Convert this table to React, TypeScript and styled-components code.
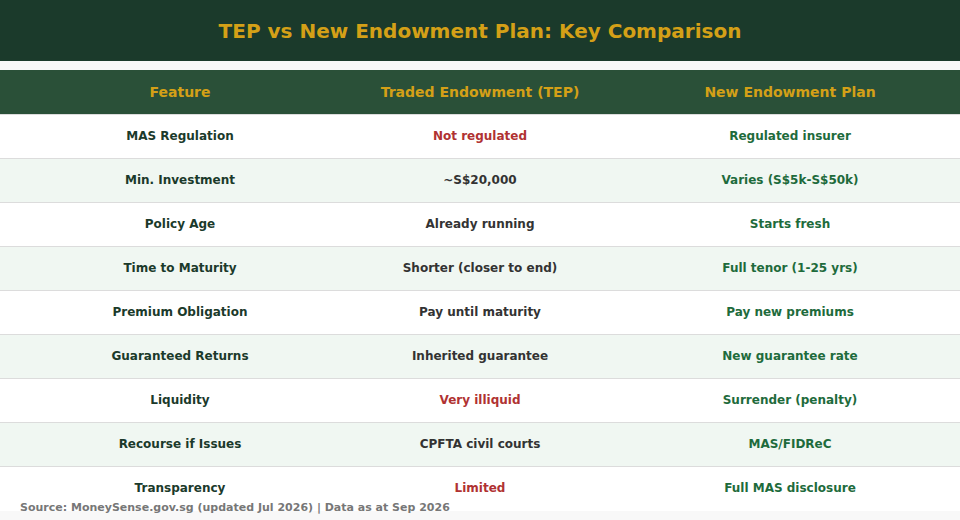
import React from "react";
import styled, { createGlobalStyle } from "styled-components";

const Global = createGlobalStyle`
  html, body { margin: 0; padding: 0; }
  body {
    background: #f8f8f8;
    font-family: "DejaVu Sans", "Liberation Sans", sans-serif;
    font-weight: bold;
  }
`;

const Page = styled.div`
  position: relative;
  width: 960px;
  height: 520px;
  overflow: hidden;
  display: flex;
  flex-direction: column;
`;

const TitleBar = styled.div`
  height: 61px;
  background: #1b3a2b;
  color: #d4a017;
  display: flex;
  align-items: center;
  justify-content: center;
  font-size: 20px;
  font-weight: bold;
  margin-bottom: 9px;
  flex-shrink: 0;
`;

const Row = styled.div<{ $bg: string; $height: number; $noBorder?: boolean }>`
  display: grid;
  grid-template-columns: 360px 240px 360px;
  height: ${(p) => p.$height}px;
  box-sizing: border-box;
  background: ${(p) => p.$bg};
  border-bottom: ${(p) => (p.$noBorder ? "none" : "1px solid #dcdcdc")};
  flex-shrink: 0;
`;

const Cell = styled.div<{ $color: string; $size: number; $last?: boolean; $lift?: number }>`
  display: flex;
  align-items: center;
  justify-content: center;
  color: ${(p) => p.$color};
  font-size: ${(p) => p.$size}px;
  font-weight: bold;
  padding-left: ${(p) => (p.$last ? "20px" : "0")};
  padding-bottom: ${(p) => p.$lift ?? 0}px;
`;

const Footer = styled.div`
  position: absolute;
  left: 20px;
  bottom: 6px;
  font-size: 11px;
  color: #777;
  font-weight: bold;
`;

const GOLD = "#d4a017";
const DARK = "#1b3a2b";
const GRAY = "#333333";
const RED = "#b03232";
const GREEN = "#1e6b3c";

type R = { f: string; t: string; tRed?: boolean; n: string };

const rows: R[] = [
  { f: "MAS Regulation", t: "Not regulated", tRed: true, n: "Regulated insurer" },
  { f: "Min. Investment", t: "~S$20,000", n: "Varies (S$5k-S$50k)" },
  { f: "Policy Age", t: "Already running", n: "Starts fresh" },
  { f: "Time to Maturity", t: "Shorter (closer to end)", n: "Full tenor (1-25 yrs)" },
  { f: "Premium Obligation", t: "Pay until maturity", n: "Pay new premiums" },
  { f: "Guaranteed Returns", t: "Inherited guarantee", n: "New guarantee rate" },
  { f: "Liquidity", t: "Very illiquid", tRed: true, n: "Surrender (penalty)" },
  { f: "Recourse if Issues", t: "CPFTA civil courts", n: "MAS/FIDReC" },
  { f: "Transparency", t: "Limited", tRed: true, n: "Full MAS disclosure" },
];

export default function App() {
  return (
    <>
      <Global />
      <Page>
        <TitleBar>TEP vs New Endowment Plan: Key Comparison</TitleBar>
        <Row $bg="#2a5038" $height={45}>
          <Cell $color={GOLD} $size={14}>Feature</Cell>
          <Cell $color={GOLD} $size={14}>Traded Endowment (TEP)</Cell>
          <Cell $color={GOLD} $size={14} $last>New Endowment Plan</Cell>
        </Row>
        {rows.map((r, i) => {
          const last = i === rows.length - 1;
          return (
            <Row key={r.f} $bg={i % 2 === 1 ? "#f0f7f2" : "#ffffff"} $height={44} $noBorder={last}>
              <Cell $color={DARK} $size={12} $lift={2}>{r.f}</Cell>
              <Cell $color={r.tRed ? RED : GRAY} $size={12} $lift={2}>{r.t}</Cell>
              <Cell $color={GREEN} $size={12} $lift={2} $last>{r.n}</Cell>
            </Row>
          );
        })}
        <Footer>Source: MoneySense.gov.sg (updated Jul 2026) | Data as at Sep 2026</Footer>
      </Page>
    </>
  );
}
